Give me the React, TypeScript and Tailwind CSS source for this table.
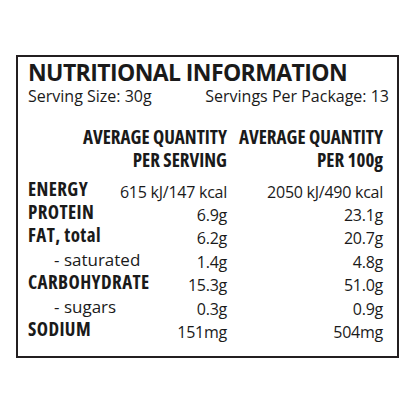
const rows = [
  { label: "ENERGY", serving: "615 kJ/147 kcal", per100: "2050 kJ/490 kcal", sub: false },
  { label: "PROTEIN", serving: "6.9g", per100: "23.1g", sub: false },
  { label: "FAT, total", serving: "6.2g", per100: "20.7g", sub: false },
  { label: "- saturated", serving: "1.4g", per100: "4.8g", sub: true },
  { label: "CARBOHYDRATE", serving: "15.3g", per100: "51.0g", sub: false },
  { label: "- sugars", serving: "0.3g", per100: "0.9g", sub: true },
  { label: "SODIUM", serving: "151mg", per100: "504mg", sub: false },
];

export default function App() {
  return (
    <div className="w-[416px] h-[416px] bg-white pt-[55px] pl-[16px] font-['Open_Sans',sans-serif] text-[#1a1a1a]">
      <div className="w-[383px] h-[303px] border-2 border-[#231f20] pl-[10px] pr-[8px] pt-[2px]">
        <h1 className="text-[23px] leading-[27px] tracking-[-0.6px] font-bold font-stretch-[90%]">
          NUTRITIONAL INFORMATION
        </h1>
        <div className="flex justify-between text-[16px] leading-[20px] font-stretch-[90%]">
          <span>Serving Size: 30g</span>
          <span>Servings Per Package: 13</span>
        </div>

        <div className="flex mt-[20px] text-[19px] leading-[23.3px] font-bold font-stretch-condensed">
          <div className="w-[199px] text-right">
            <div>AVERAGE QUANTITY</div>
            <div>PER SERVING</div>
          </div>
          <div className="w-[156px] text-right">
            <div>AVERAGE QUANTITY</div>
            <div>PER 100g</div>
          </div>
        </div>

        <div className="mt-[5px]">
          {rows.map((r) => (
            <div key={r.label} className="flex h-[23.4px] leading-[23.4px]">
              <div
                className={
                  r.sub
                    ? "w-[90px] pl-[26px] text-[17px] font-stretch-[90%] whitespace-nowrap"
                    : "w-[90px] text-[19px] tracking-[0.4px] font-bold font-stretch-condensed whitespace-nowrap"
                }
              >
                {r.label}
              </div>
              <div className="w-[109px] pt-[3px] text-right text-[16px] tracking-[-0.25px] font-stretch-[90%] whitespace-nowrap">
                {r.serving}
              </div>
              <div className="w-[156px] pt-[3px] text-right text-[16px] tracking-[-0.25px] font-stretch-[90%] whitespace-nowrap">
                {r.per100}
              </div>
            </div>
          ))}
        </div>
      </div>
    </div>
  );
}
